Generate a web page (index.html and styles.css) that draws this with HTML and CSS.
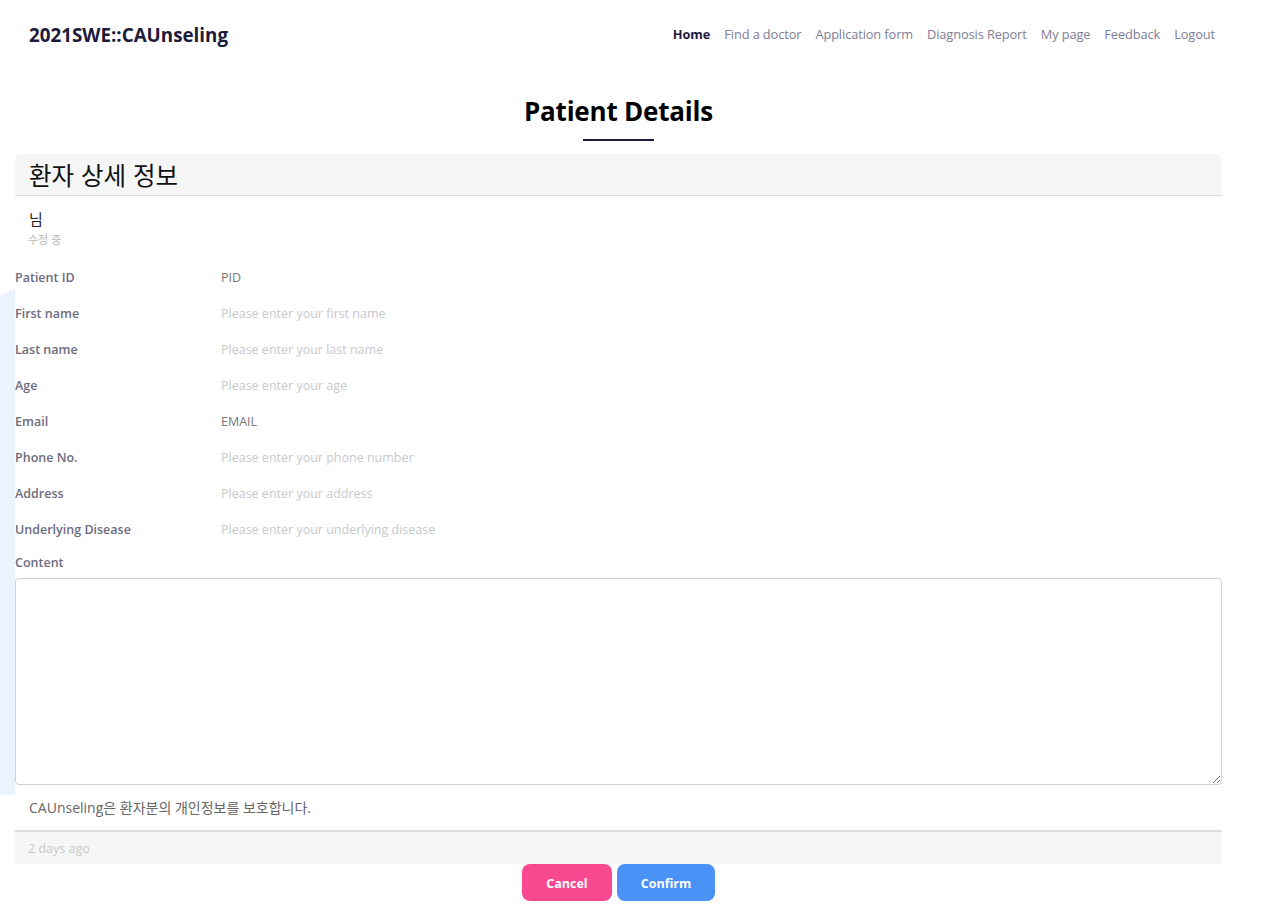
FILE: index.html
```html
<!DOCTYPE html>
<html lang="ko">
<head>
<meta charset="utf-8">
<title>Patient Details</title>
<link rel="stylesheet" href="styles.css">
</head>
<body>
<div class="bg-deco"></div>
<header class="topbar">
  <div class="brand">2021SWE::CAUnseling</div>
  <nav class="nav">
    <a class="nav-link active">Home</a>
    <a class="nav-link">Find a doctor</a>
    <a class="nav-link">Application form</a>
    <a class="nav-link">Diagnosis Report</a>
    <a class="nav-link">My page</a>
    <a class="nav-link">Feedback</a>
    <a class="nav-link">Logout</a>
  </nav>
</header>
<main class="main">
  <h1 class="page-title">Patient Details</h1>
  <div class="title-bar"></div>
  <section class="card">
    <div class="card-header">환자 상세 정보</div>
    <div class="card-sub">
      <div class="sub-name">님</div>
      <div class="sub-status">수정 중</div>
    </div>
    <div class="form">
      <div class="row"><span class="label">Patient ID</span><span class="value">PID</span></div>
      <div class="row"><span class="label">First name</span><span class="value ph">Please enter your first name</span></div>
      <div class="row"><span class="label">Last name</span><span class="value ph">Please enter your last name</span></div>
      <div class="row"><span class="label">Age</span><span class="value ph">Please enter your age</span></div>
      <div class="row"><span class="label">Email</span><span class="value">EMAIL</span></div>
      <div class="row"><span class="label">Phone No.</span><span class="value ph">Please enter your phone number</span></div>
      <div class="row"><span class="label">Address</span><span class="value ph">Please enter your address</span></div>
      <div class="row"><span class="label">Underlying Disease</span><span class="value ph">Please enter your underlying disease</span></div>
      <div class="content-block">
        <div class="label">Content</div>
        <textarea class="content-area"></textarea>
      </div>
    </div>
    <p class="notice">CAUnseling은 환자분의 개인정보를 보호합니다.</p>
    <div class="card-footer">2 days ago</div>
  </section>
  <div class="actions">
    <button class="btn btn-cancel">Cancel</button>
    <button class="btn btn-confirm">Confirm</button>
  </div>
</main>
</body>
</html>
```
FILE: styles.css
```css
* { box-sizing: border-box; }
html, body { margin: 0; padding: 0; background: #fff; }
body {
  font-family: "Open Sans", "Noto Sans CJK KR", sans-serif;
  color: #222;
  position: relative;
  min-height: 922px;
}
.bg-deco {
  position: absolute;
  left: 0;
  top: 288px;
  width: 15px;
  height: 507px;
  background: #eaf3fe;
  clip-path: polygon(0 8px, 100% 0, 100% 100%, 0 100%);
}
.topbar {
  display: flex;
  justify-content: space-between;
  align-items: center;
  height: 69px;
  padding: 0 54px 0 29px;
}
.brand {
  font-size: 18.8px;
  font-weight: 700;
  color: #1d1a3a;
}
.nav { display: flex; gap: 14px; margin-top: -2px; }
.nav-link {
  font-size: 12.8px;
  color: #7d7d98;
  letter-spacing: -0.1px;
}
.nav-link.active { color: #1d1a3a; font-weight: 700; }
.main {
  width: 1207px;
  margin-left: 15px;
  position: relative;
}
.page-title {
  margin: 24px 0 0;
  text-align: center;
  font-size: 26px;
  line-height: 36px;
  font-weight: 700;
  color: #000;
  letter-spacing: -0.2px;
}
.title-bar {
  width: 71px;
  height: 2px;
  background: #1d1a3a;
  margin: 10px auto 0;
}
.card { margin-top: 13px; }
.card-header {
  height: 42px;
  background: #f6f6f6;
  border-bottom: 1px solid #d9d9d9;
  border-radius: 6px 6px 0 0;
  padding-left: 14px;
  display: flex;
  align-items: center;
  font-family: "Noto Sans CJK KR", sans-serif;
  font-size: 24.5px;
  color: #111;
}
.card-sub { padding: 11px 0 12px 14px; }
.sub-name {
  font-family: "Noto Sans CJK KR", sans-serif;
  font-size: 15px;
  line-height: 24px;
  color: #222;
}
.sub-status {
  font-family: "Noto Sans CJK KR", sans-serif;
  font-size: 11px;
  line-height: 16px;
  color: #b8b8b8;
  margin-left: -1px;
}
.row {
  display: flex;
  align-items: center;
  height: 36px;
}
.label {
  width: 206px;
  font-size: 12.5px;
  font-weight: 600;
  color: #6c6c7e;
}
.value {
  font-size: 12.5px;
  color: #777;
}
.value.ph { color: #c8c8cc; }
.content-block { padding-top: 6px; }
.content-block .label { line-height: 20px; margin-bottom: 5px; }
.content-area {
  display: block;
  width: 100%;
  height: 207px;
  border: 1px solid #cfcfcf;
  border-radius: 4px;
  resize: vertical;
  background: #fff;
}
.notice {
  margin: 13px 0 0;
  padding: 0 0 12px 14px;
  line-height: 20px;
  font-family: "Open Sans", "Noto Sans CJK KR", sans-serif;
  font-size: 14px;
  color: #666;
  border-bottom: 2px solid #dcdcdc;
}
.card-footer {
  height: 32px;
  background: #f6f6f6;
  padding-left: 13px;
  display: flex;
  align-items: center;
  padding-top: 1px;
  font-size: 12.5px;
  color: #c8c8c8;
}
.actions {
  display: flex;
  justify-content: center;
  gap: 5px;
}
.btn {
  height: 37px;
  padding-top: 2px;
  border: none;
  border-radius: 8px;
  font-family: "Open Sans", sans-serif;
  font-size: 12.5px;
  font-weight: 700;
  color: #fff;
}
.btn-cancel { width: 90px; background: #f8488f; }
.btn-confirm { width: 98px; background: #4a92f6; }
```
